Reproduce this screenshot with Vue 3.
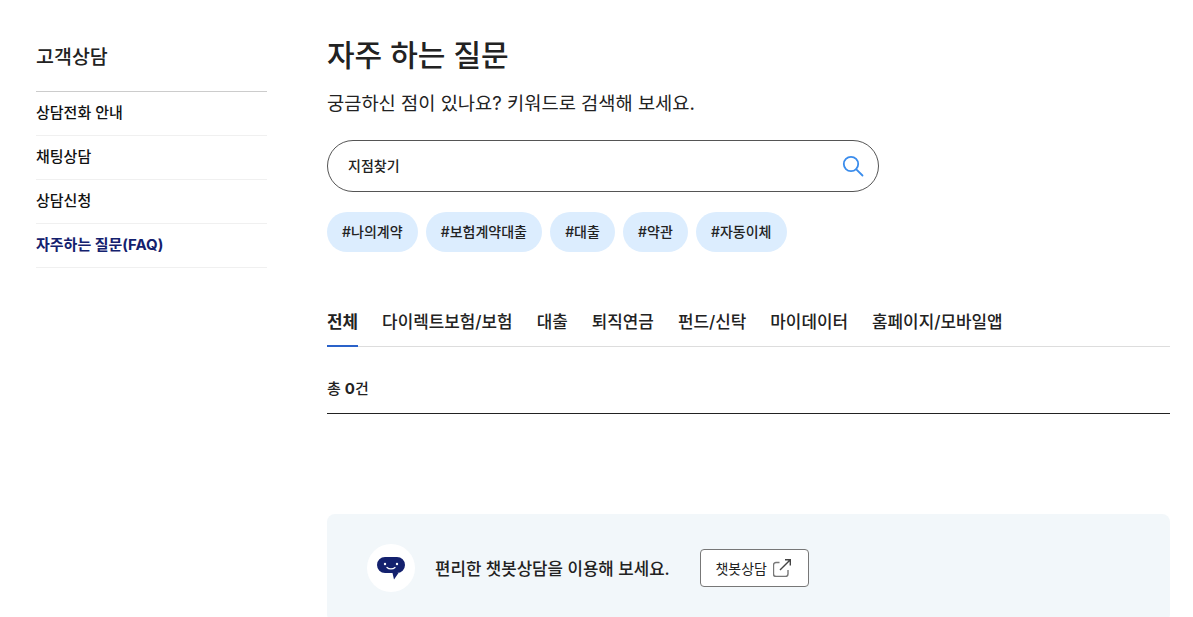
<script setup>
const menus = [
  { label: '상담전화 안내' },
  { label: '채팅상담' },
  { label: '상담신청' },
  { label: '자주하는 질문(FAQ)', active: true },
]
const keywords = ['#나의계약', '#보험계약대출', '#대출', '#약관', '#자동이체']
const tabs = ['전체', '다이렉트보험/보험', '대출', '퇴직연금', '펀드/신탁', '마이데이터', '홈페이지/모바일앱']
</script>

<template>
  <div class="page">
    <aside class="side">
      <h2 class="side-title">고객상담</h2>
      <ul class="side-menu">
        <li v-for="m in menus" :key="m.label" :class="{ active: m.active }">{{ m.label }}</li>
      </ul>
    </aside>

    <main class="main">
      <h1 class="title">자주 하는 질문</h1>
      <p class="desc">궁금하신 점이 있나요? 키워드로 검색해 보세요.</p>

      <div class="search">
        <span class="search-text">지점찾기</span>
        <svg class="search-icon" width="22" height="22" viewBox="0 0 22 22" fill="none" stroke="#3a8cec" stroke-width="1.8">
          <circle cx="9" cy="9" r="7.200" />
          <path d="M14.300 14.300 L20.500 20.500" stroke-linecap="round" />
        </svg>
      </div>

      <div class="chips">
        <span v-for="k in keywords" :key="k" class="chip">{{ k }}</span>
      </div>

      <div class="tabs">
        <span v-for="(t, i) in tabs" :key="t" class="tab" :class="{ on: i === 0 }">{{ t }}</span>
      </div>

      <div class="total">총 <b>0</b>건</div>

      <div class="banner">
        <div class="bot">
          <svg width="28" height="23" viewBox="0 0 28 23">
            <path d="M8 0h12a8 8 0 0 1 0 16h1.500L17 22.500 15.500 16H8A8 8 0 0 1 8 0z" fill="#14216e" />
            <circle cx="8" cy="7" r="1.200" fill="#fff" />
            <circle cx="20" cy="7" r="1.200" fill="#fff" />
            <path d="M10 10.500c2 1.900 6 1.900 8 0" fill="none" stroke="#fff" stroke-width="1.200" stroke-linecap="round" />
          </svg>
        </div>
        <span class="banner-text">편리한 챗봇상담을 이용해 보세요.</span>
        <button class="bot-btn">
          챗봇상담
          <svg width="18" height="18" viewBox="0 0 18 18" fill="none" stroke-width="1.400">
            <path d="M6.500 3.500H3a2.500 2.500 0 0 0-2.500 2.500v9A2.500 2.500 0 0 0 3 17.500h9.500A2.500 2.500 0 0 0 15 15v-4" stroke="#777" />
            <path d="M7 11 L17.300 .7 M12 .7h5.300V6.500" stroke="#444" />
          </svg>
        </button>
      </div>
    </main>
  </div>
</template>

<style>
html, body {
  margin: 0;
  height: 100%;
  overflow: hidden;
  background: #fff;
}
</style>

<style scoped>
.page {
  display: flex;
  gap: 60px;
  padding-left: 36px;
  padding-right: 23px;
  font-family: Inter, "Noto Sans CJK KR", sans-serif;
  color: #222;
}
.side {
  width: 231px;
  flex-shrink: 0;
  padding-top: 40px;
}
.side-title {
  margin: 0;
  height: 51px;
  font-size: 19.500px;
  line-height: 34px;
  font-weight: 500;
  border-bottom: 1px solid #ccc;
}
.side-menu {
  list-style: none;
  margin: 0;
  padding: 0;
}
.side-menu li {
  height: 43px;
  line-height: 41px;
  font-size: 15px;
  font-weight: 500;
  color: #111;
  border-bottom: 1px solid #f0f0f0;
}
.side-menu li.active {
  color: #14216e;
  font-weight: 700;
}
.main {
  flex: 1;
  min-width: 0;
}
.title {
  margin: 0;
  padding-top: 33px;
  font-size: 30px;
  line-height: 44px;
  font-weight: 500;
}
.desc {
  margin: 12px 0 0;
  font-size: 18.700px;
  line-height: 30px;
  color: #222;
}
.search {
  margin-top: 21px;
  width: 552px;
  height: 52px;
  box-sizing: border-box;
  border: 1px solid #555;
  border-radius: 26px;
  display: flex;
  align-items: center;
  justify-content: space-between;
  padding: 0 14px 0 20px;
}
.search-text {
  font-size: 14px;
  font-weight: 500;
  padding-bottom: 2px;
}
.chips {
  display: flex;
  gap: 8px;
  margin-top: 20px;
}
.chip {
  height: 40px;
  line-height: 40px;
  padding: 0 15.100px;
  border-radius: 20px;
  background: #dcedfe;
  font-size: 14px;
  font-weight: 500;
}
.tabs {
  display: flex;
  gap: 24px;
  margin-top: 49px;
  border-bottom: 1px solid #ddd;
}
.tab {
  height: 46px;
  line-height: 42px;
  font-size: 16.900px;
  font-weight: 500;
  margin-bottom: -1px;
  box-sizing: border-box;
}
.tab.on {
  font-weight: 700;
  border-bottom: 2px solid #2a62c9;
}
.total {
  height: 67px;
  line-height: 84px;
  box-sizing: border-box;
  font-size: 15px;
  font-weight: 500;
  border-bottom: 1px solid #222;
}
.total b {
  font-weight: 700;
}
.banner {
  margin-top: 100px;
  height: 108px;
  background: #f2f7fa;
  border-radius: 8px;
  padding: 30px 40px;
  box-sizing: border-box;
  display: flex;
  align-items: flex-start;
}
.bot {
  width: 48px;
  height: 48px;
  border-radius: 50%;
  background: #fff;
  display: flex;
  align-items: center;
  justify-content: center;
}
.banner-text {
  margin-left: 20px;
  font-size: 16.800px;
  font-weight: 500;
  line-height: 50px;
}
.bot-btn {
  margin: 5px 0 0 30px;
  width: 109px;
  height: 38px;
  box-sizing: border-box;
  border: 1px solid #777;
  border-radius: 4px;
  background: #fff;
  font-family: inherit;
  font-size: 14px;
  color: #222;
  display: flex;
  align-items: center;
  justify-content: center;
  gap: 6px;
  padding: 0 2px 0 0;
}
</style>
